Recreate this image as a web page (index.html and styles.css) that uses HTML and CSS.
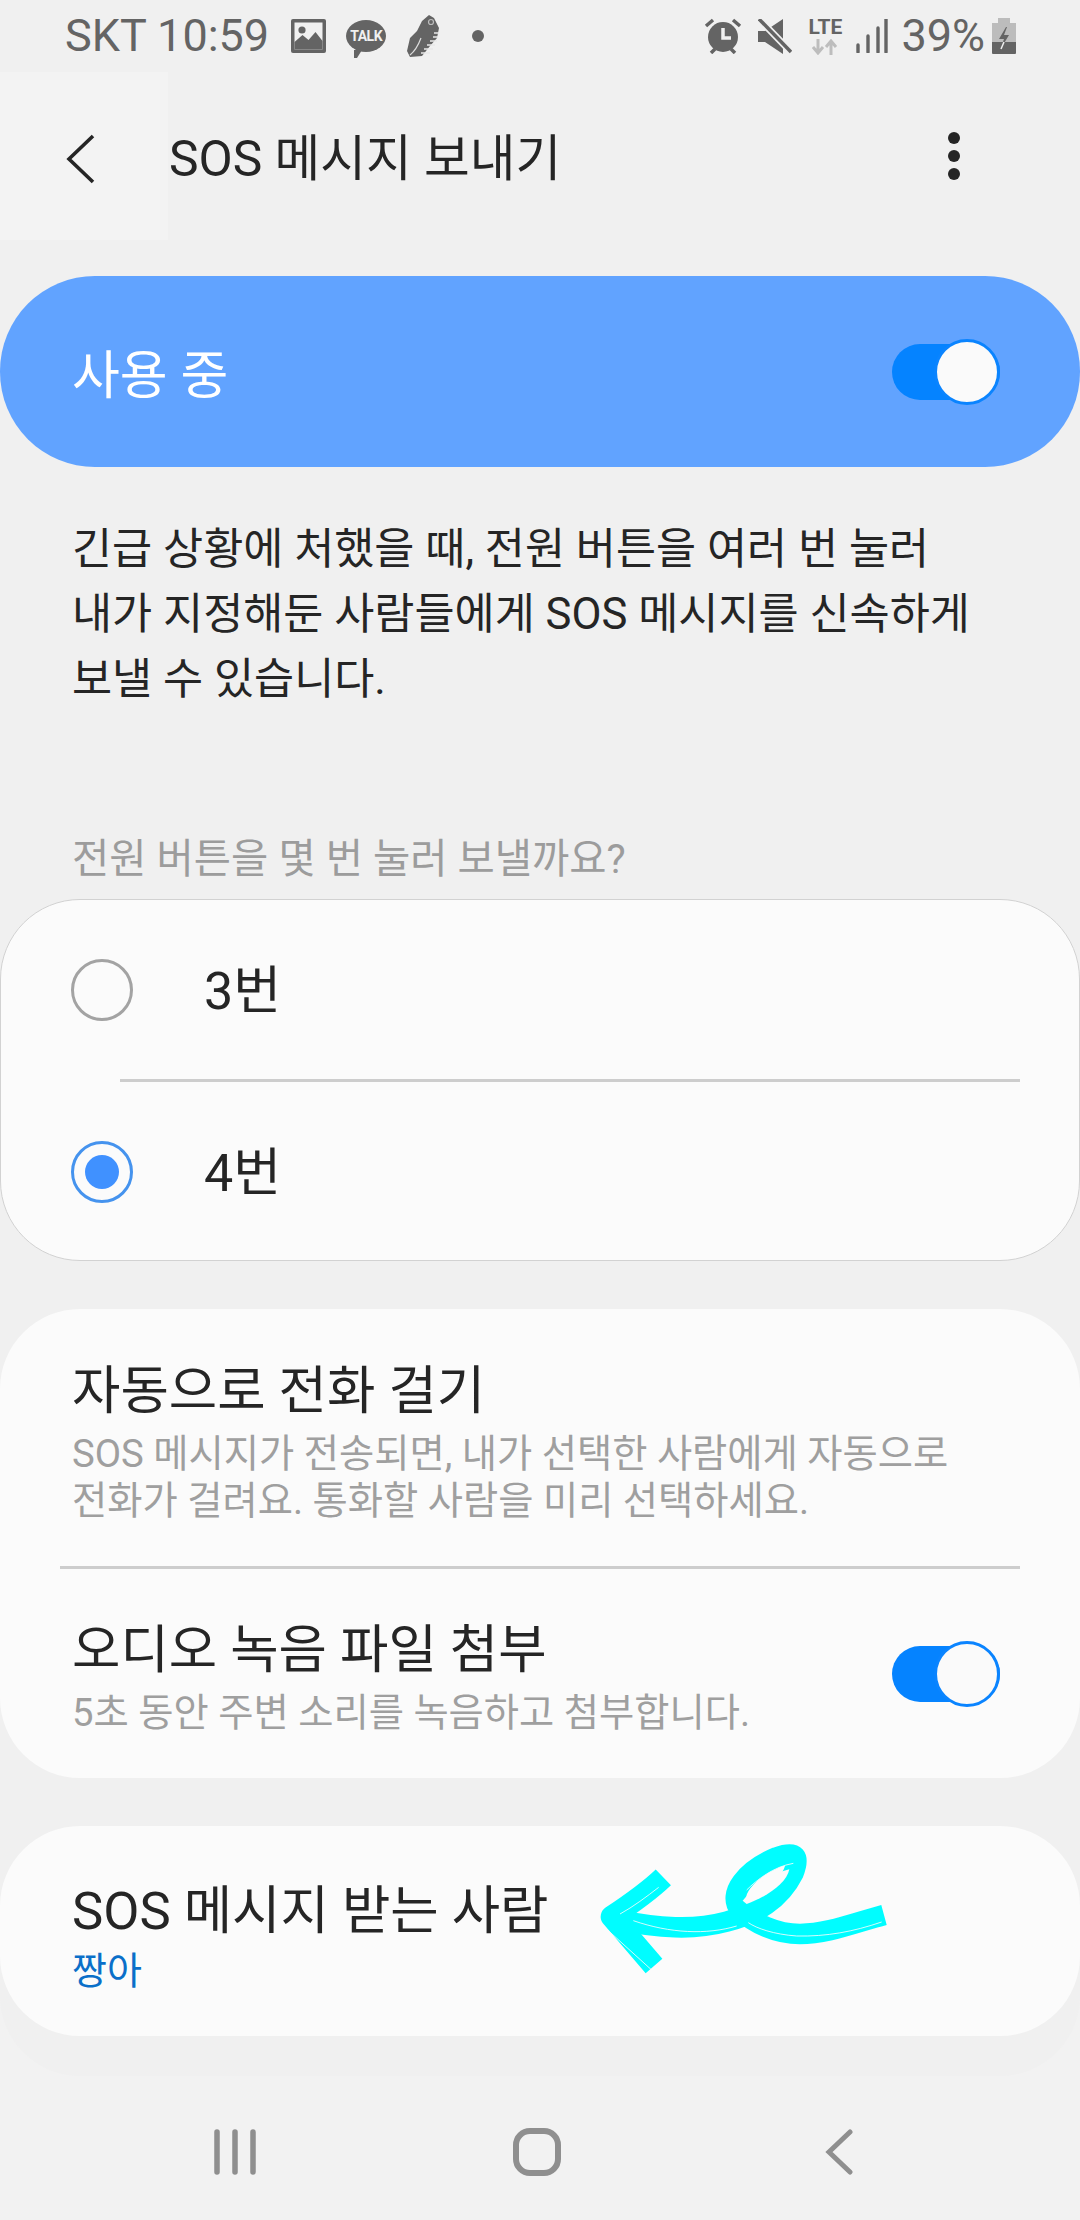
FILE: index.html
```html
<!DOCTYPE html>
<html lang="ko">
<head>
  <meta charset="UTF-8" />
  <meta name="viewport" content="width=device-width, initial-scale=1.0" />
  <title>SOS 메시지 보내기</title>
  <link rel="stylesheet" href="styles.css">
</head>
<body>
  <div class="screen">
    <div class="patch"></div>
    <div class="floor"></div>

    <div class="status-bar">
      <div class="status-left">
        <span class="status-text">SKT 10:59</span>
        <svg class="ic-image" viewBox="0 0 35 34"><rect width="35" height="34" rx="2" fill="#646464"/><rect x="3.500" y="3.500" width="28" height="27" fill="#f0f0f0"/><circle cx="11" cy="11" r="3.600" fill="#646464"/><path d="M3.500 30.500V23l8-7 6 5 7-8 7 9v8.500z" fill="#646464"/></svg>
        <span class="talk"><span class="talk-text">TALK</span></span>
        <svg class="ic-shoe" viewBox="0 0 32 42"><path d="M22 0l5 3 5 10-2 10-7 8-8 10-12 1-3-6 3-13 7-7 5-10z" fill="#646464"/><path d="M14 38h9M17 34h9M20 30h8M23 26h7M26 22h5M27 18h5" stroke="#e8e8e8" stroke-width="1.700" fill="none"/><circle cx="24" cy="7" r="2.500" fill="none" stroke="#bdbdbd" stroke-width="1.200"/><path d="M3 40c5-4 8-9 11-17" stroke="#dcdcdc" stroke-width="1.200" fill="none"/></svg>
        <span class="dot"></span>
      </div>
      <div class="status-right">
        <svg class="ic-alarm" viewBox="0 0 38 36"><circle cx="19" cy="19" r="15" fill="#646464"/><path d="M2 8l7-6M36 8l-7-6M7 35l4-4M31 35l-4-4" stroke="#646464" stroke-width="3.500" fill="none"/><path d="M19 10v10h8" stroke="#f0f0f0" stroke-width="3.500" fill="none"/></svg>
        <svg class="ic-mute" viewBox="0 0 34 35"><path d="M0 12h7L25 0v35L7 23H0z" fill="#646464"/><path d="M2 1l31 32" stroke="#f0f0f0" stroke-width="7" fill="none"/><path d="M1 0l32 33" stroke="#646464" stroke-width="3.500" fill="none"/></svg>
        <span class="lte">
          <span class="lte-text">LTE</span>
          <svg class="ic-updown" viewBox="0 0 26 16"><path d="M6 0v13M1 8l5 6 5-6M19 16V3M14 8l5-6 5 6" stroke="#bdbdbd" stroke-width="3" fill="none"/></svg>
        </span>
        <svg class="ic-signal" viewBox="0 0 32 34"><path d="M2 33v-7M12 33V17M22 33V9M30 33V0" stroke="#646464" stroke-width="3.400" stroke-linecap="round" fill="none"/></svg>
        <span class="status-text">39%</span>
        <svg class="ic-battery" viewBox="0 0 24 36"><path d="M6 0h12v5h6v19H0V5h6z" fill="#bcbcbc"/><path d="M0 24h24v11a1 1 0 0 1-1 1H1a1 1 0 0 1-1-1z" fill="#646464"/><path d="M14 9L7 21h5l-4 11 9-15h-5l3-8z" fill="#646464"/><path d="M12 24l-3 7" stroke="#f0f0f0" stroke-width="1.500"/></svg>
      </div>
    </div>

    <div class="app-bar">
      <svg class="back" viewBox="0 0 30 50"><path d="M27 2L3 25l24 23" stroke="#252525" stroke-width="3.600" fill="none"/></svg>
      <h1 class="app-title">SOS 메시지 보내기</h1>
      <div class="more"><span></span><span></span><span></span></div>
    </div>

    <div class="master">
      <span class="master-label">사용 중</span>
      <span class="switch"><span class="knob"></span></span>
    </div>

    <p class="intro">긴급 상황에 처했을 때, 전원 버튼을 여러 번 눌러<br>내가 지정해둔 사람들에게 SOS 메시지를 신속하게<br>보낼 수 있습니다.</p>

    <div class="hint">전원 버튼을 몇 번 눌러 보낼까요?</div>

    <div class="card card-radio">
      <div class="radio-row"><span class="radio"></span><span class="radio-label">3번</span></div>
      <div class="divider divider-inset"></div>
      <div class="radio-row"><span class="radio on"></span><span class="radio-label">4번</span></div>
    </div>

    <div class="card card-options">
      <div class="option option-call">
        <div>
          <div class="option-title">자동으로 전화 걸기</div>
          <div class="option-sub">SOS 메시지가 전송되면, 내가 선택한 사람에게 자동으로<br>전화가 걸려요. 통화할 사람을 미리 선택하세요.</div>
        </div>
      </div>
      <div class="divider"></div>
      <div class="option option-audio">
        <div>
          <div class="option-title">오디오 녹음 파일 첨부</div>
          <div class="option-sub">5초 동안 주변 소리를 녹음하고 첨부합니다.</div>
        </div>
        <span class="switch"><span class="knob"></span></span>
      </div>
    </div>

    <div class="card card-people">
      <div class="option-title">SOS 메시지 받는 사람</div>
      <div class="people-name">짱아</div>
      <svg class="scribble" viewBox="0 0 1080 600">
        <g fill="none" stroke="#00fdff" stroke-linecap="butt" stroke-linejoin="round">
          <path d="M972 345C880 370 800 402 720 402 650 402 580 370 540 330 500 280 560 210 650 172 710 150 720 170 700 220 660 300 590 340 500 365 400 392 300 385 160 358" stroke-width="62"/>
          <path d="M310 232C260 280 200 320 155 350L282 498" stroke-width="66"/>
        </g>
        <g fill="none" stroke="#fbfbfb" stroke-width="2.500">
          <path d="M965 366C880 395 800 410 710 408 640 403 590 385 565 368"/>
          <path d="M530 378C440 405 330 400 220 362"/>
          <path d="M145 392L275 510M700 190C640 200 590 240 560 270M180 342C220 320 260 290 296 262"/>
        </g>
        <path d="M548 302C590 250 640 220 688 208 680 250 620 290 560 312z" fill="#fbfbfb"/>
      </svg>
    </div>

    <div class="nav-bar">
      <svg class="nav-recent" viewBox="0 0 42 46"><path d="M3 3v40M21 3v40M39 3v40" stroke="#8f8f8f" stroke-width="5.500" stroke-linecap="round" fill="none"/></svg>
      <svg class="nav-home" viewBox="0 0 48 48"><rect x="3" y="3" width="42" height="42" rx="14" stroke="#8f8f8f" stroke-width="6" fill="none"/></svg>
      <svg class="nav-back" viewBox="0 0 28 46"><path d="M25 3L4 23l21 20" stroke="#8f8f8f" stroke-width="5" stroke-linecap="round" fill="none"/></svg>
    </div>
  </div>
</body>
</html>
```

FILE: styles.css
```css
* { box-sizing: border-box; }
html, body {
  margin: 0;
  padding: 0;
}
body {
  font-family: Roboto, 'Noto Sans CJK KR', sans-serif;
  background: #f0f0f0;
  color: #252525;
}
.screen {
  position: relative;
  width: 1080px;
  height: 2220px;
  overflow: hidden;
  display: flex;
  flex-direction: column;
}
/* lighter block left over behind the back button */
.patch {
  position: absolute;
  left: 0;
  top: 72px;
  width: 168px;
  height: 168px;
  background: #f3f3f3;
}
/* lighter area at the bottom, shows round the last card's shadow */
.floor {
  position: absolute;
  left: 0;
  right: 0;
  bottom: 0;
  height: 270px;
  background: #f2f2f2;
}

/* status bar */
.status-bar {
  position: relative;
  height: 72px;
  padding: 0 64px 0 65px;
  display: flex;
  justify-content: space-between;
  align-items: center;
}
.status-left, .status-right {
  display: flex;
  align-items: center;
}
.status-text {
  font-size: 45px;
  line-height: 72px;
  color: #646464;
}
.ic-image { width: 35px; height: 34px; margin-left: 22px; }
.talk {
  position: relative;
  width: 40px;
  height: 32px;
  margin-left: 20px;
  border-radius: 50%;
  background: #646464;
  display: flex;
  align-items: center;
  justify-content: center;
}
.talk::after {
  content: "";
  position: absolute;
  left: 8px;
  bottom: -6px;
  border-left: 3px solid #646464;
  border-right: 5px solid transparent;
  border-top: 8px solid #646464;
}
.talk-text {
  font-size: 14px;
  font-weight: 700;
  letter-spacing: -0.5px;
  color: #f0f0f0;
}
.ic-shoe { width: 32px; height: 42px; margin-left: 21px; }
.dot {
  width: 12px;
  height: 12px;
  margin-left: 33px;
  border-radius: 50%;
  background: #646464;
}
.ic-alarm { width: 38px; height: 36px; }
.ic-mute { width: 34px; height: 35px; margin-left: 16px; }
.lte {
  width: 36px;
  margin-left: 15px;
  display: flex;
  flex-direction: column;
  align-items: center;
}
.lte-text {
  font-size: 21px;
  line-height: 20px;
  font-weight: 700;
  color: #646464;
}
.ic-updown { width: 26px; height: 16px; margin-top: 2px; }
.ic-signal { width: 32px; height: 34px; margin-left: 13px; }
.status-right .status-text { margin-left: 13px; }
.ic-battery { width: 24px; height: 36px; margin-left: 7px; }

/* app bar */
.app-bar {
  position: relative;
  height: 204px;
  padding: 0 0 0 66px;
  display: flex;
  align-items: center;
}
.back { width: 30px; height: 50px; margin-top: -30px; }
.app-title {
  margin: -30px 0 0 73px;
  font-size: 49.7px;
  line-height: 60px;
  font-weight: 400;
}
.more {
  position: absolute;
  left: 948px;
  top: 60px;
  display: flex;
  flex-direction: column;
  gap: 6px;
}
.more span {
  width: 12px;
  height: 12px;
  border-radius: 50%;
  background: #252525;
}

/* master switch */
.master {
  height: 191px;
  padding: 0 80px 0 72px;
  border-radius: 95px;
  background: #61a3ff;
  display: flex;
  align-items: center;
  justify-content: space-between;
}
.master-label {
  font-size: 52px;
  color: #fff;
}
.switch {
  position: relative;
  flex: none;
  width: 108px;
  height: 56px;
  border-radius: 28px;
  background: #0583ff;
}
.knob {
  position: absolute;
  right: 0;
  top: -5px;
  width: 66px;
  height: 66px;
  border-radius: 50%;
  border: 3px solid #0a84ff;
  background: #fafafa;
}

.intro {
  margin: 50px 0 0;
  padding-left: 72px;
  font-size: 43.6px;
  line-height: 65px;
}
.hint {
  margin-top: 122px;
  padding-left: 72px;
  font-size: 40.5px;
  line-height: 50px;
  color: #9c9c9c;
}

/* cards */
.card {
  position: relative;
  background: #fbfbfb;
  border-radius: 80px;
}
.card-radio {
  height: 362px;
  margin-top: 15px;
  border: 1px solid #d2d2d2;
}
.radio-row {
  height: 179px;
  padding-left: 70px;
  display: flex;
  align-items: center;
}
.radio {
  width: 62px;
  height: 62px;
  border-radius: 50%;
  border: 3px solid #a3a3a3;
  display: flex;
  align-items: center;
  justify-content: center;
}
.radio.on { border-color: #4593ee; }
.radio.on::after {
  content: "";
  width: 34px;
  height: 34px;
  border-radius: 50%;
  background: #4091ff;
}
.radio-label {
  margin: -7px 0 0 71px;
  font-size: 52px;
}
.divider {
  height: 3px;
  margin: 0 60px;
  background: #cdcdcd;
}
.divider-inset { margin: 0 59px 0 119px; }

.card-options {
  height: 469px;
  margin-top: 48px;
}
.option {
  padding: 8px 57px 0 72px;
  display: flex;
  align-items: center;
  justify-content: space-between;
}
.option-call { height: 257px; }
.option-audio { height: 209px; padding: 6px 80px 0 72px; }
.option-audio .switch { margin-top: -6px; }
.option-title {
  font-size: 52.6px;
  line-height: 64px;
}
.option-sub {
  margin-top: 7px;
  font-size: 38.3px;
  line-height: 47px;
  color: #9f9f9f;
}
.card-people {
  height: 210px;
  margin-top: 48px;
  padding: 53px 72px 0;
  box-shadow: 0 40px 0 #f0f0f0;
}
.people-name {
  margin-top: 3px;
  font-size: 38px;
  line-height: 50px;
  color: #0a6fc9;
}
.scribble {
  position: absolute;
  left: 560px;
  top: -26px;
  width: 360px;
  height: 200px;
}

/* nav bar */
.nav-bar {
  position: absolute;
  left: 0;
  right: 0;
  bottom: 0;
  height: 144px;
}
.nav-bar svg { position: absolute; }
.nav-recent { left: 214px; top: 53px; width: 42px; height: 46px; }
.nav-home { left: 513px; top: 52px; width: 48px; height: 48px; }
.nav-back { left: 825px; top: 53px; width: 28px; height: 46px; }
```
